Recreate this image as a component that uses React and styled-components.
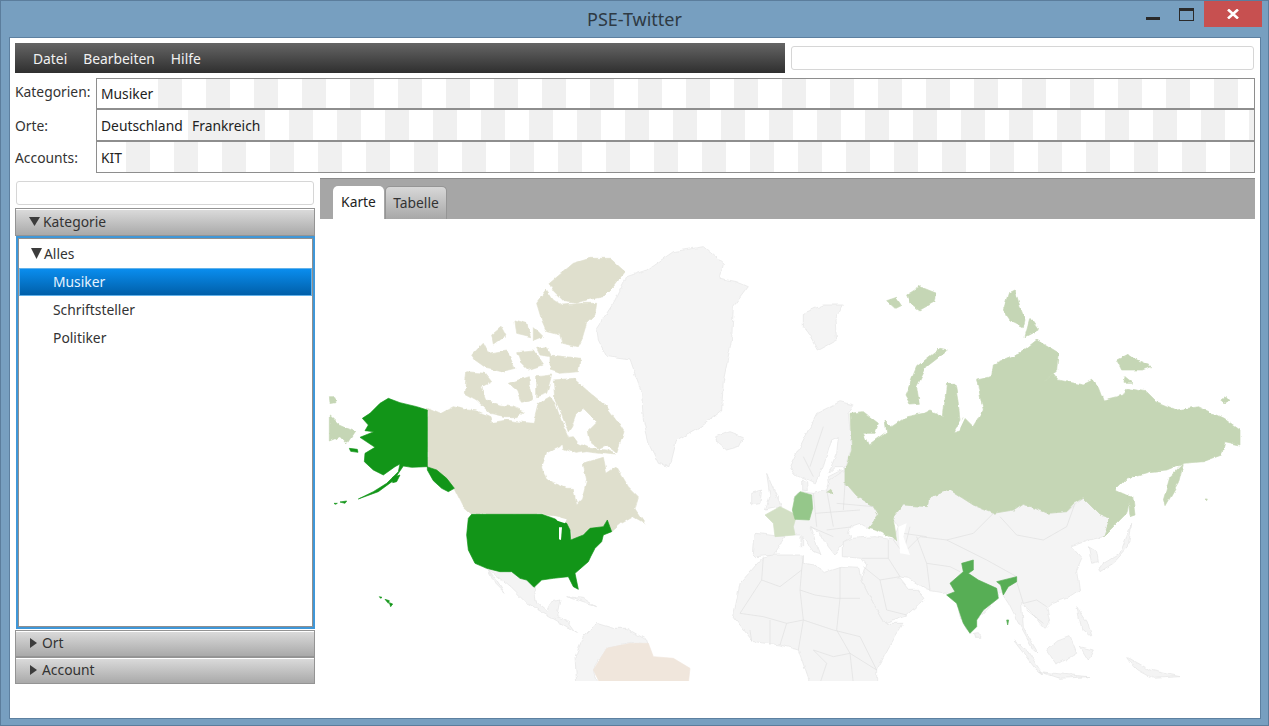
import React from "react";
import styled, { createGlobalStyle } from "styled-components";

const Global = createGlobalStyle`
  html, body { margin: 0; padding: 0; background: #779fc0; }
  * { box-sizing: border-box; }
`;
const Win = styled.div`
  width: 1269px; height: 726px; display: flex; flex-direction: column;
  background: #779fc0; border: 1px solid #5b7d9c;
  font-family: "Noto Sans", "Open Sans", sans-serif; font-size: 13.85px; color: #333;
  overflow: hidden;
`;
const TitleBar = styled.header`
  height: 36px; flex: none; display: grid; grid-template-columns: 1fr auto 1fr;
`;
const Title = styled.div`
  grid-column: 2; font-size: 18px; line-height: 37px; color: #2e3a44;
`;
const Controls = styled.div`
  grid-column: 3; display: flex; justify-content: flex-end; align-items: flex-start; padding-right: 6px;
`;
const MinBtn = styled.div`
  width: 14px; height: 3px; background: #2a2a2a; margin: 16px 19px 0 0;
`;
const MaxBtn = styled.div`
  width: 15px; height: 13px; border: 1px solid #2a2a2a; border-top-width: 3px; margin: 7px 10px 0 0;
`;
const CloseBtn = styled.div`
  width: 58px; height: 26px; background: #c75050; display: flex; align-items: center; justify-content: center;
`;
const Body = styled.main`
  flex: 1; margin: 0 7px 6px 8px; background: #fff; border: 1px solid #5d80a0; padding: 5px;
  display: flex; flex-direction: column;
`;
const TopRow = styled.div`
  display: flex; align-items: center; gap: 6px; height: 30px; flex: none;
`;
const MenuBar = styled.nav`
  width: 770px; height: 30px; flex: none; display: flex; align-items: center; padding: 1px 0 0 10px;
  background: linear-gradient(#656565, #2f2f2f);
`;
const MenuItem = styled.span`
  padding: 0 8px; color: #f2f2f2; line-height: 28px;
`;
const SearchField = styled.div`
  height: 24px; background: #fff; border: 1px solid #d6d6d6; border-radius: 3px;
  flex: ${p => (p.$grow ? 1 : "none")}; margin: ${p => p.$margin || 0};
`;
const FilterGrid = styled.section`
  margin-top: 5px; display: grid; grid-template-columns: 81px 1fr; flex: none;
`;
const FilterLabel = styled.div`
  height: ${p => p.$h}px; display: flex; align-items: center;
  padding-bottom: ${p => p.$lift || 0}px; color: #333;
`;
const TagRow = styled.div`
  height: ${p => p.$h}px; display: flex; border: 1px solid #8e8e8e;
`;
const Tag = styled.div`
  padding-left: 4px; display: flex; align-items: center; color: #222; flex: none;
  background: ${p => (p.$alt ? "#f0f0f0" : "#fff")};
  width: ${p => p.$w}px;
`;
const Stripes = styled.div`
  flex: 1;
  background: repeating-linear-gradient(90deg,
    ${p => (p.$greyFirst ? "#f0f0f0" : "#fff")} 0 24px,
    ${p => (p.$greyFirst ? "#fff" : "#f0f0f0")} 24px 48px);
`;
const Main = styled.div`
  margin-top: 5px; display: flex; gap: 5px; flex: 1; min-height: 0;
`;
const Left = styled.aside`
  width: 300px; flex: none; display: flex; flex-direction: column; padding-top: 3px;
`;
const Accordion = styled.div`
  margin-top: 3px; display: flex; flex-direction: column;
`;
const PaneHeader = styled.div`
  height: ${p => p.$h}px; display: flex; align-items: center; gap: ${p => p.$gap}px; padding: 0 0 2px ${p => p.$pl}px;
  border: 1px solid #949494; box-shadow: inset 0 1px 0 #fff;
  background: linear-gradient(#dcdcdc, #a9a9a9); color: #333;
`;
const Expanded = styled.div`
  height: 393px; border: 2px solid #3f97d8; margin: 0 0 1px 1px;
`;
const TreeBox = styled.div`
  height: 100%; border: 1px solid #8f8f8f; background: #fff; padding-top: 1px; display: flex; flex-direction: column;
`;
const TreeRow = styled.div`
  height: 28px; flex: none; display: flex; align-items: center; color: ${p => (p.$sel ? "#e6f3ff" : "#333")};
  padding: 0 0 2px ${p => p.$pl}px; gap: 2px;
  ${p => p.$sel && `
    background: linear-gradient(#0a8dee, #005fa9);
    border: 1px solid #62b2ea;
    padding-left: ${p.$pl - 1}px;
  `}
`;
const Triangle = styled.svg`
  flex: none; display: block; fill: #3c3c3c;
`;
const Right = styled.section`
  flex: 1; display: flex; flex-direction: column; min-width: 0;
`;
const TabBar = styled.div`
  height: 41px; flex: none; display: flex; align-items: flex-end; gap: 1px; padding-left: 13px;
  background: #a6a6a6; border-top: 1px solid #8b8b8b;
`;
const Tab = styled.div`
  height: 33px; width: ${p => p.$w}px; justify-content: center; display: flex; align-items: center;
  border-radius: 5px 5px 0 0; padding-bottom: 2px;
  color: ${p => (p.$active ? "#222" : "#333")};
  background: ${p => (p.$active ? "#fff" : "linear-gradient(#d8d8d8, #a8a8a8)")};
  border: ${p => (p.$active ? "0" : "1px solid #959595")};
  border-bottom: 0;
`;
const MapArea = styled.div`
  flex: 1; background: #fff; min-height: 0;
`;
const MapSvg = styled.svg`
  display: block; width: 935px; height: 462px; filter: blur(0.35px);
`;

const G = "#f4f4f4", L = "#c5d6b5", C = "#dfdfcd", U = "#129518", W = "#ffffff";

// Land with rough coasts. West: 3x grid from page (320,240)
const westLand = [
  [G, "830,265 880,190 920,110 980,90 1060,35 1150,20 1210,70 1200,115 1250,125 1285,140 1240,200 1235,300 1210,420 1205,510 1140,560 1070,600 1050,680 1015,670 990,620 970,540 965,460 930,360 860,350 835,300"],
  [G, "1190,590 1230,575 1270,590 1255,620 1220,630 1195,610"],
  [G, "1340,700 1355,735 1385,800 1335,810 1350,770"],
  [G, "1295,760 1325,750 1320,790 1295,795"],
  [G, "1305,880 1395,890 1360,945 1310,950 1300,940"],
  [G, "500,985 540,995 575,995 600,1015 620,1020 642,1042 650,1090 680,1115 695,1085 720,1080 710,1130 740,1140 770,1180 740,1160 690,1130 620,1090 570,1040 520,1000"],
  [G, "505,990 530,1020 555,1060 525,1030"],
  [G, "740,1070 790,1075 830,1100 790,1088"],
  [G, "770,1330 765,1250 790,1190 830,1150 880,1165 920,1165 980,1200 985,1215 930,1210 860,1225 820,1290 830,1330"],
  [C, "322,505 360,522 400,500 440,510 470,512 510,530 515,548 560,540 590,545 640,550 655,490 690,470 705,490 725,545 745,590 720,620 680,640 665,680 680,720 740,745 760,745 770,795 785,780 800,720 790,670 850,652 860,700 890,680 925,740 955,770 945,805 975,850 940,830 905,850 875,875 862,840 850,860 810,865 775,895 752,900 750,870 720,830 665,823 455,823 430,800 403,745 350,700 322,680"],
  [C, "700,420 760,415 800,450 860,500 890,540 912,575 890,640 860,615 835,625 812,610 805,570 830,545 790,505 770,520 755,560 745,575 725,525 705,480"],
  [C, "725,595 760,590 775,610 810,625 860,630 885,645 840,640 800,635 765,640 730,625"],
  [C, "688,130 730,95 760,70 810,55 870,55 915,95 880,140 850,170 800,180 770,190 730,185 700,155"],
  [C, "650,190 680,150 700,180 725,195 790,190 830,190 825,225 800,250 785,300 775,320 725,310 720,285 680,275 665,240"],
  [C, "440,395 495,400 515,425 485,440 500,480 540,495 575,500 610,515 590,530 555,530 510,520 470,480 433,460"],
  [C, "565,430 625,410 640,480 605,490 590,450"],
  [C, "650,410 695,405 680,460 650,470"],
  [C, "515,285 545,260 558,285 520,312"],
  [C, "585,240 620,250 632,290 590,280"],
  [C, "640,260 670,290 640,302"],
  [C, "590,335 640,330 670,375 625,390 600,365"],
  [C, "690,345 780,355 775,395 720,400 690,390"],
  [C, "650,325 680,320 695,350 660,345"],
  [C, "455,345 490,310 505,340 560,330 585,385 545,395 500,385 465,360"],
  [L, "28,525 60,555 105,575 80,612 60,590 28,603"],
  [L, "28,470 45,470 48,485 30,488"],
];
// East: 3x grid from page (760,270)
const eastLand = [
  [G, "130,130 190,105 250,105 225,150 230,210 175,240 150,195 130,170"],
  [G, "90,590 150,470 170,430 240,395 280,405 265,430 275,530 255,590 225,590 205,610 230,550 235,500 215,510 190,590 165,640 135,625 100,610"],
  [G, "125,630 140,635 142,662 125,660"],
  [G, "255,595 255,640 210,650 205,620"],
  [G, "100,690 125,665 160,670 200,660 210,630 255,600 255,640 290,680 340,710 355,735 325,775 300,760 270,770 262,790 275,800 255,812 238,835 225,855 205,830 185,795 150,770 168,820 180,852 160,845 125,795 105,795 100,770 108,735"],
  [G, "250,815 275,805 345,800 400,810 415,770 400,745 430,705 505,710 510,680 570,660 640,705 700,730 760,720 790,700 860,730 920,725 970,685 1020,735 1050,745 1030,800 990,810 935,830 965,865 950,900 958,960 920,985 880,1000 860,1010 870,1060 855,1075 840,1060 810,1020 785,1000 790,1075 835,1150 820,1140 770,1050 745,1000 722,965 700,1000 640,1060 630,1090 600,1040 590,990 560,970 500,960 475,945 445,925 415,920 445,958 470,958 495,985 440,1035 375,1058 340,1000 305,930 320,885 305,865 250,860"],
  [G, "-80,1040 -60,940 10,860 40,855 130,855 130,880 165,885 190,908 240,892 300,895 305,930 340,1000 375,1060 430,1060 400,1110 350,1200 350,1240 150,1240 115,1140 60,1125 -20,1115"],
  [G, "985,830 1010,845 1015,875 995,880"],
  [G, "1015,890 1080,850 1100,800 1115,760 1105,830 1060,880 1020,905"],
  [G, "860,1140 890,1115 930,1100 950,1150 890,1185"],
  [G, "760,1110 800,1140 850,1215 825,1195"],
  [G, "950,1010 985,1060 995,1100 965,1075"],
  [G, "960,1130 1000,1140 985,1170"],
  [G, "1100,1160 1170,1200 1260,1220 1180,1225 1125,1195"],
  [G, "840,1205 930,1215 990,1220 900,1225"],
  [G, "640,1090 655,1088 660,1105 645,1105"],
  [G, "120,800 128,800 128,830 120,830"],
  [L, "270,430 310,425 355,460 345,490 310,490 325,525 380,485 375,450 395,470 440,440 490,430 510,420 550,440 560,340 585,340 595,400 600,450 580,485 600,480 610,440 640,470 670,420 650,330 695,320 700,285 780,250 830,210 895,250 890,300 850,335 880,310 895,330 970,345 1000,330 1015,350 1030,390 1090,375 1100,355 1160,365 1190,395 1250,420 1315,410 1390,445 1440,480 1440,525 1395,515 1385,555 1330,575 1270,580 1220,600 1170,605 1100,625 1065,660 1110,680 1100,730 1060,770 1030,800 1050,745 1020,735 970,685 945,700 920,725 860,730 790,700 760,720 700,730 640,705 570,660 510,680 505,710 430,705 400,745 410,810 345,780 325,775 355,735 340,710 290,680 255,640 255,595 275,540"],
  [L, "1210,690 1230,620 1270,580 1255,640 1215,710"],
  [L, "1105,680 1118,680 1125,735 1110,740"],
  [L, "435,375 470,290 540,235 565,240 500,290 470,350 478,400 450,402"],
  [L, "380,92 410,82 425,105 405,115"],
  [L, "440,75 480,50 530,70 525,95 480,120 450,100"],
  [L, "730,120 745,70 765,60 780,110 795,150 790,170 750,150"],
  [L, "810,145 835,180 795,200"],
  [L, "1070,270 1100,255 1175,290 1150,300 1085,300"],
  [L, "1095,320 1120,340 1092,340"],
  [L, "1385,390 1400,380 1410,392 1395,398"],
  [L, "197,670 212,658 222,670"],
];
// Clean-edged countries on top
const westTop = [
  ["#f0e6dc", "820,1290 860,1225 930,1210 985,1210 1000,1250 1060,1255 1110,1285 1105,1330 840,1330"],
  [U, "322,510 290,500 240,488 205,475 180,490 150,520 127,535 145,555 135,572 162,575 120,592 150,612 165,622 135,640 133,665 160,690 190,705 225,680 240,672 235,695 200,730 160,755 115,777 175,755 220,722 250,678 275,682 320,680 350,690 380,715 403,745 385,755 365,745 340,722 322,690"],
  [U, "88,625 112,628 114,637 92,634"],
  [U, "218,712 240,705 230,725 218,728"],
  [U, "60,786 80,783 75,790"],
  [U, "42,790 52,790 46,793"],
  [U, "455,823 665,823 695,833 740,850 750,870 752,900 790,885 810,865 850,860 862,840 875,875 850,885 845,905 825,925 812,950 805,965 765,1000 775,1048 760,1040 745,1010 700,1015 665,1020 642,1042 620,1020 600,1015 575,995 540,995 500,985 465,970 445,930 440,885 445,835"],
  [W, "717,862 726,862 723,900 717,898"],
  [W, "700,827 740,838 735,850 712,842"],
  [U, "178,1070 186,1072 182,1075"],
  [U, "195,1078 208,1082 205,1090"],
  [U, "208,1088 218,1092 212,1100"],
];
const eastTop = [
  ["#d2dfc4", "15,735 60,710 110,735 100,770 105,795 45,800 40,760"],
  ["#95c78a", "105,680 120,665 155,675 158,715 148,750 105,748 97,720"],
  ["#57ae55", "605,880 640,870 640,900 625,910 655,930 710,955 715,985 670,1020 650,1050 650,1070 630,1090 610,1060 590,1000 560,975 585,965 570,940 610,905"],
  ["#57ae55", "710,935 770,920 770,935 745,950 730,975 722,945"],
  ["#57ae55", "740,1050 746,1050 743,1065"],
  [L, "1335,687 1342,687 1340,692"],
];

const borders = [
  "10,860 5,930 -60,1030", "130,855 125,900 120,960 130,1050 115,1140", "240,892 240,985 230,1080", "125,900 60,950 5,930",
  "120,960 165,975 230,985 300,985", "60,1125 80,1060 130,1050 220,1080 300,1100 350,1200", "230,1080 270,1150 350,1200",
  "-60,1030 10,1040 80,1060", "160,1140 220,1160 270,1150 280,1240", "180,1240 200,1180 160,1140",
  "-30,1080 -25,1115", "30,1050 30,1125", "310,890 360,930 420,920", "360,930 380,1020 440,1035",
  "385,810 385,865 305,865", "385,865 420,920",
  "500,880 510,960", "430,850 480,800 560,810 610,835", "560,810 640,790 700,730", "720,740 770,795 850,810 920,770 945,700",
  "610,835 680,870 770,920", "500,880 570,890 600,905", "770,935 790,1000 830,990 860,1010", "800,1020 850,1060",
  "160,670 170,770", "200,660 220,770", "255,640 250,720", "165,730 300,720", "200,780 280,770", "130,560 160,620", "190,470 150,590",
  "430,850 450,770", "500,800 430,790", "230,700 340,710", "150,770 220,800", "470,800 500,880", "400,810 430,850",
];
const seas = ["415,770 440,760 430,800 450,855 420,850", "600,350 610,400 612,440 585,485 598,480 618,438 602,400"];

const tri = (dir, w, h) =>
  dir === "down" ? `0,0 ${w},0 ${w / 2},${h}` : `0,0 ${w},${h / 2} 0,${h}`;

const Arrow = ({ dir, w, h }) => (
  <Triangle width={w} height={h} viewBox={`0 0 ${w} ${h}`}>
    <polygon points={tri(dir, w, h)} />
  </Triangle>
);

const Shapes = ({ list }) =>
  list.map(([f, p], i) => <polygon key={i} points={p} fill={f} stroke={f === G ? "#e4e4e4" : f === W ? "none" : f} />);

const WorldMap = () => (
  <MapSvg viewBox="320 219 935 462">
    <defs>
      <filter id="rough" x="-5%" y="-5%" width="110%" height="110%">
        <feTurbulence type="fractalNoise" baseFrequency="0.035" numOctaves="3" seed="7" />
        <feDisplacementMap in="SourceGraphic" scale="13" xChannelSelector="R" yChannelSelector="G" />
      </filter>
    </defs>
    <g transform="translate(320 240) scale(0.33333)" strokeWidth="2" strokeLinejoin="round">
      <g filter="url(#rough)"><Shapes list={westLand} /></g>
      <Shapes list={westTop} />
    </g>
    <g transform="translate(760 270) scale(0.33333)" strokeWidth="2" strokeLinejoin="round">
      <g filter="url(#rough)"><Shapes list={eastLand} /></g>
      {borders.map((p, i) => <polyline key={i} points={p} fill="none" stroke="#e0e0e0" />)}
      {seas.map((p, i) => <polygon key={i} points={p} fill="#fff" />)}
      <Shapes list={eastTop} />
    </g>
  </MapSvg>
);

const rows = [
  { label: "Kategorien:", h: 31, lift: 5, tags: [["Musiker", 61]], grey: true },
  { label: "Orte:", h: 32, tags: [["Deutschland", 91], ["Frankreich", 77, true]], grey: false },
  { label: "Accounts:", h: 32, tags: [["KIT", 29]], grey: true },
];

export default function App() {
  return (
    <Win>
      <Global />
      <TitleBar>
        <Title>PSE-Twitter</Title>
        <Controls>
          <MinBtn />
          <MaxBtn />
          <CloseBtn>
            <svg width="12" height="10" viewBox="0 0 12 10">
              <path d="M1 0.5 L11 9.5 M11 0.5 L1 9.5" stroke="#fff" strokeWidth="2.6" />
            </svg>
          </CloseBtn>
        </Controls>
      </TitleBar>
      <Body>
        <TopRow>
          <MenuBar>
            <MenuItem>Datei</MenuItem>
            <MenuItem>Bearbeiten</MenuItem>
            <MenuItem>Hilfe</MenuItem>
          </MenuBar>
          <SearchField $grow $margin="0 1px 0 0" />
        </TopRow>
        <FilterGrid>
          {rows.map(r => (
            <React.Fragment key={r.label}>
              <FilterLabel $h={r.h} $lift={r.lift}>{r.label}</FilterLabel>
              <TagRow $h={r.h}>
                {r.tags.map(([t, w, alt]) => (
                  <Tag key={t} $w={w} $alt={alt}>{t}</Tag>
                ))}
                <Stripes $greyFirst={r.grey} />
              </TagRow>
            </React.Fragment>
          ))}
        </FilterGrid>
        <Main>
          <Left>
            <SearchField $margin="0 1px" />
            <Accordion>
              <PaneHeader $h={28} $gap={3} $pl={13}>
                <Arrow dir="down" w={11} h={9} />
                Kategorie
              </PaneHeader>
              <Expanded>
                <TreeBox>
                  <TreeRow $pl={12}>
                    <Arrow dir="down" w={11} h={11} />
                    Alles
                  </TreeRow>
                  <TreeRow $pl={34} $sel>Musiker</TreeRow>
                  <TreeRow $pl={34}>Schriftsteller</TreeRow>
                  <TreeRow $pl={34}>Politiker</TreeRow>
                </TreeBox>
              </Expanded>
              <PaneHeader $h={27} $gap={5} $pl={14}>
                <Arrow dir="right" w={7} h={10} />
                Ort
              </PaneHeader>
              <PaneHeader $h={27} $gap={5} $pl={14}>
                <Arrow dir="right" w={7} h={10} />
                Account
              </PaneHeader>
            </Accordion>
          </Left>
          <Right>
            <TabBar>
              <Tab $active $w={51}>Karte</Tab>
              <Tab $w={62}>Tabelle</Tab>
            </TabBar>
            <MapArea>
              <WorldMap />
            </MapArea>
          </Right>
        </Main>
      </Body>
    </Win>
  );
}
